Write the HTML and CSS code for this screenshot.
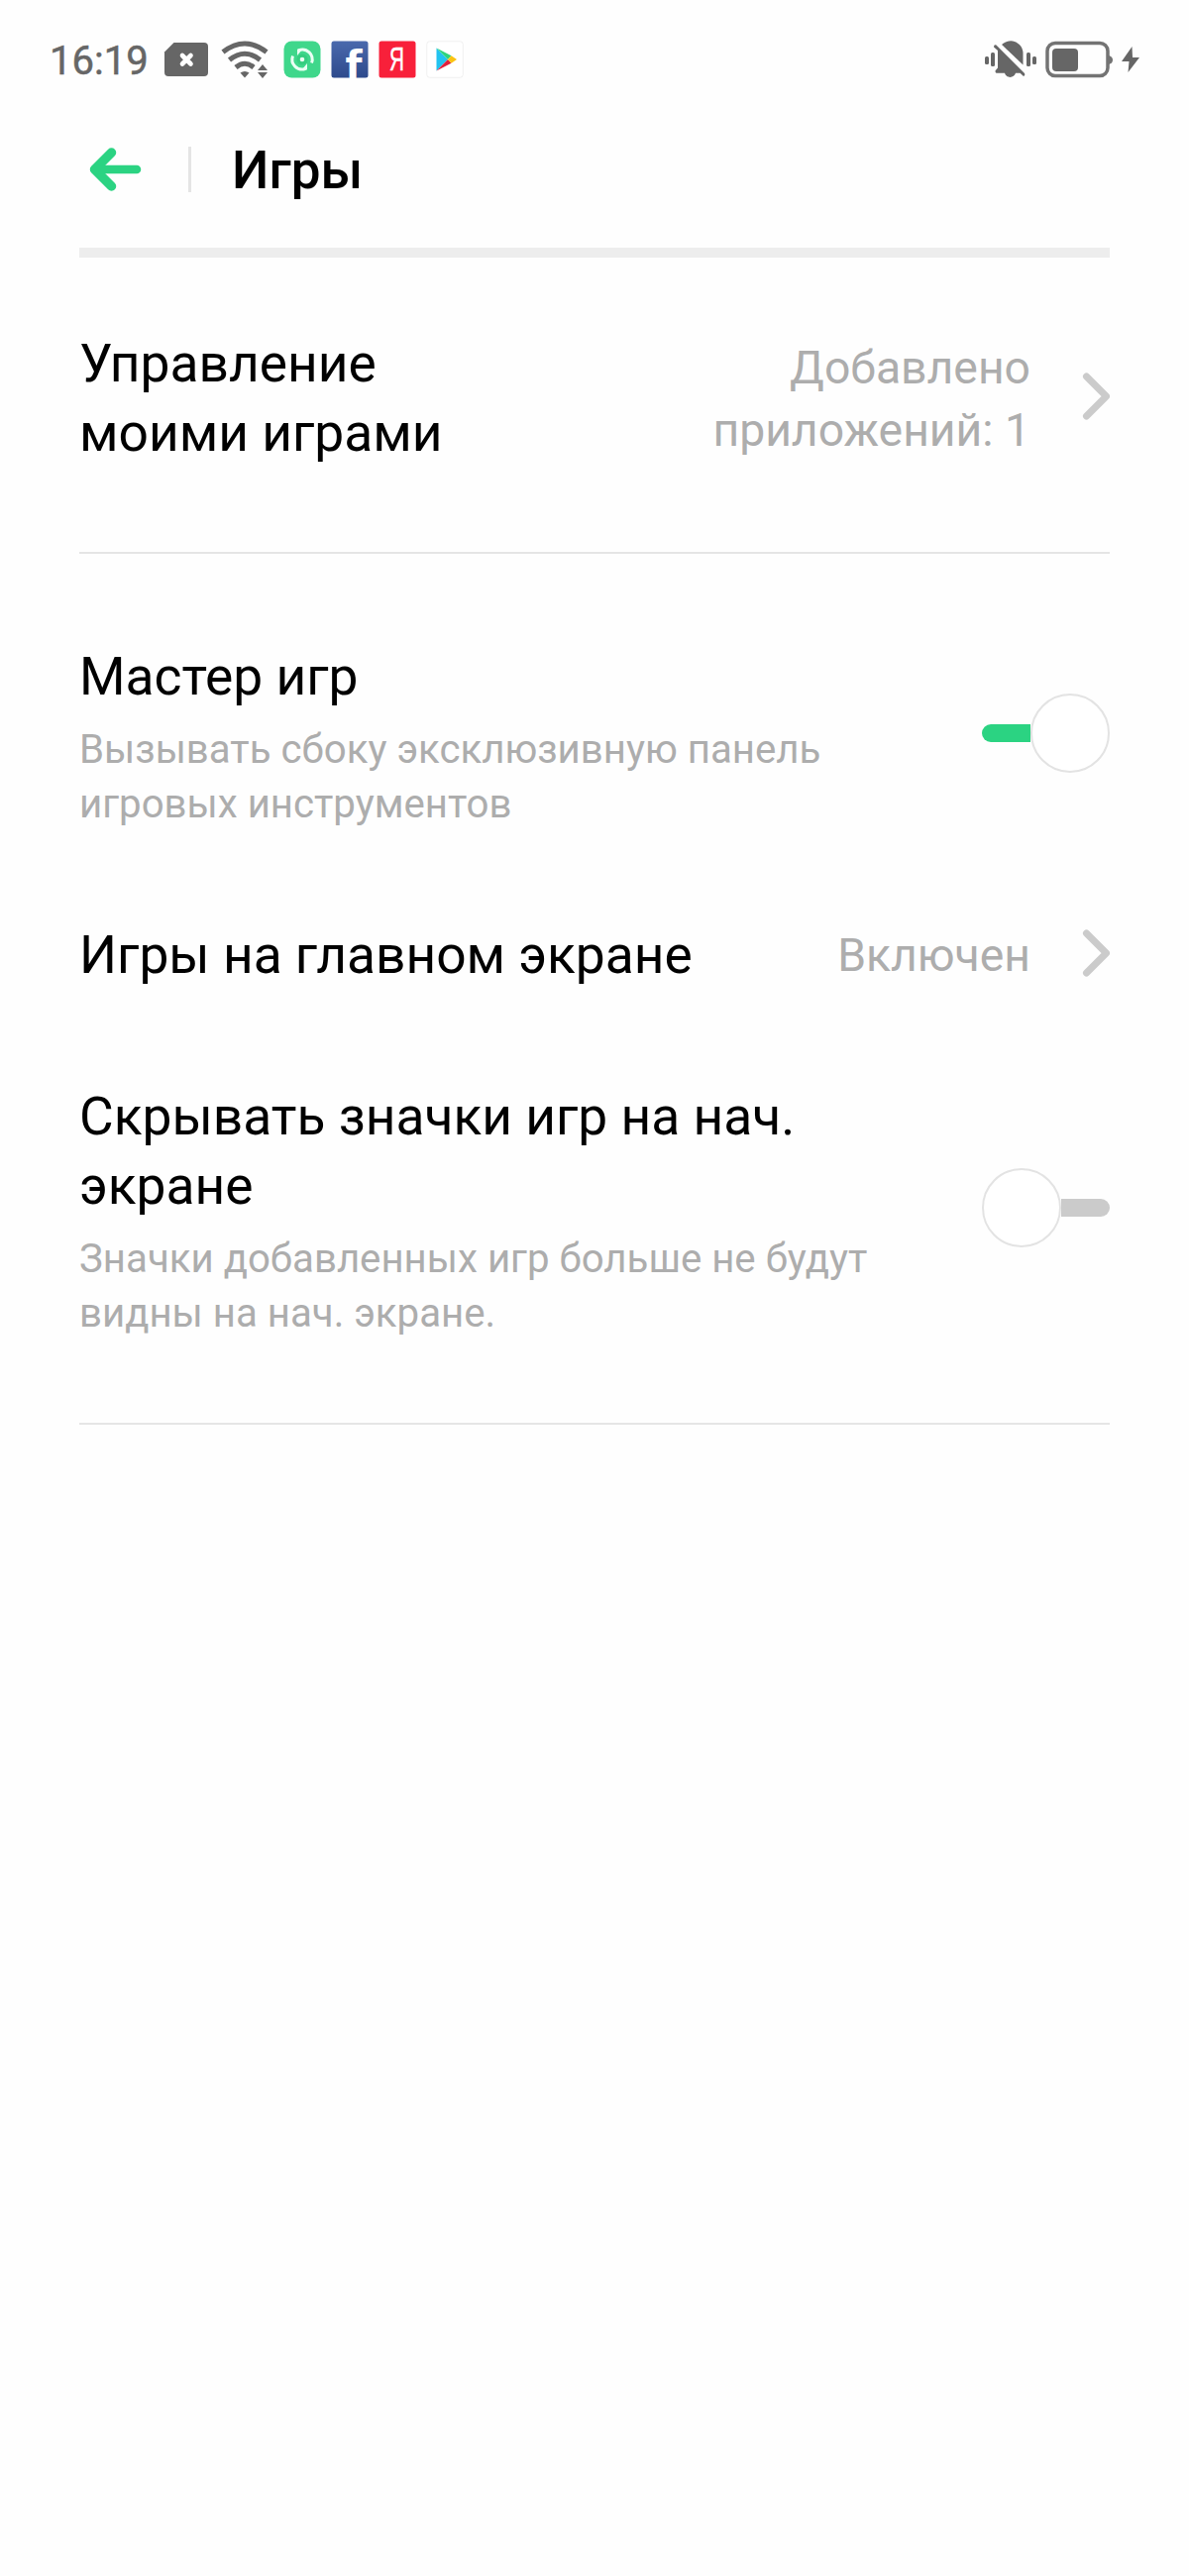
FILE: index.html
```html
<!DOCTYPE html>
<html lang="ru">

<head>
    <meta charset="UTF-8">
    <meta name="viewport" content="width=device-width, initial-scale=1.0">
    <title>Игры</title>
    <link rel="stylesheet" href="styles.css">
</head>

<body>
    <!-- Строка состояния -->
    <div class="status-bar">
        <div class="status-left">
            <span class="time">16:19</span>
            <svg class="icon-sim" width="46" height="36" viewBox="0 0 46 36">
                <path d="M10.500 1H41a4 4 0 0 1 4 4v26a4 4 0 0 1-4 4H5a4 4 0 0 1-4-4V10.500z" fill="#666" />
                <path d="M19 14l8.500 8.500M27.500 14L19 22.500" stroke="#fff" stroke-width="4.600" stroke-linecap="round" />
            </svg>
            <svg class="icon-wifi" width="48" height="38" viewBox="0 0 48 38">
                <g fill="none" stroke="#666" stroke-width="5">
                    <path d="M2 11.500Q24 -5.500 46 11.500" />
                    <path d="M8.500 19.500Q24 7 39.500 19.500" />
                    <path d="M15 27Q24 19.500 33 27" />
                </g>
                <path d="M19.500 32.500q4.500-3 9 0L24 37.500z" fill="#666" />
                <path d="M37 30l5-6 5 6zM37 32h10l-5 6z" fill="#666" />
            </svg>
            <svg class="app-icon" width="38" height="38" viewBox="0 0 38 38">
                <rect x=".5" y=".5" width="37" height="37" rx="8" fill="#3fd78b" />
                <g fill="none" stroke="#eafff4" stroke-width="3">
                    <path d="M9.500 15.500A10 10 0 0 0 22.500 28.300" />
                    <path d="M28.500 22.500A10 10 0 0 0 15.500 9.700" />
                </g>
                <path d="M14 8.500l5 .5-5 6zM24 29.500l-5-.5 5-6z" fill="#eafff4" />
                <circle cx="19" cy="19" r="5.500" fill="#35cd80" />
                <circle cx="19" cy="19" r="2.300" fill="#eafff4" />
            </svg>
            <svg class="app-icon" width="38" height="38" viewBox="0 0 38 38">
                <defs>
                    <linearGradient id="fb" x1="0" y1="0" x2="0" y2="1">
                        <stop offset="0" stop-color="#4a69ad" />
                        <stop offset="1" stop-color="#2d4a8c" />
                    </linearGradient>
                </defs>
                <rect x=".5" y=".5" width="37" height="37" rx="2.500" fill="url(#fb)" />
                <text class="fb-letter" x="14.500" y="37.500">f</text>
            </svg>
            <svg class="app-icon" width="38" height="38" viewBox="0 0 38 38">
                <rect x=".5" y=".5" width="37" height="37" rx="2.500" fill="#f8203a" />
                <text class="ya-letter" x="11" y="30" textLength="15" lengthAdjust="spacingAndGlyphs">Я</text>
            </svg>
            <svg class="app-icon" width="38" height="38" viewBox="0 0 38 38">
                <rect x=".75" y=".75" width="36.500" height="36.500" rx="3" fill="#fff" stroke="#f0f0f0" stroke-width="1" />
                <path d="M10.500 7.500v23L22 19z" fill="#22c3f0" />
                <path d="M10.500 7.500L25.500 15.300 22 19z" fill="#2fd47c" />
                <path d="M10.500 30.500L25.500 22.700 22 19z" fill="#e0203c" />
                <path d="M25.500 15.300L31 19 25.500 22.700 22 19z" fill="#fbc312" />
            </svg>
        </div>
        <div class="status-right">
            <svg class="icon-bell" width="53" height="40" viewBox="0 0 53 40">
                <g fill="#666">
                    <rect x="1" y="17" width="4" height="8" rx="1.500" />
                    <rect x="7" y="13" width="4" height="14" rx="1.500" />
                    <rect x="43" y="13" width="4" height="14" rx="1.500" />
                    <rect x="49" y="17" width="4" height="8" rx="1.500" />
                    <path d="M18 5C22 1.500 27 .500 31 2c5 2 8.500 6 8.500 12v11.500z" />
                    <path d="M12.500 5.500L41 34q1 2-1 3l-3.500-3.200H32c-1.500 5.500-9.500 5.500-11 0H12.500q-2-2 0-3.500l1.500-1.800V11L10 7.500q0-3 2.500-2z" />
                </g>
            </svg>
            <svg class="icon-battery" width="68" height="38" viewBox="0 0 68 38">
                <rect x="2" y="2.500" width="61" height="33" rx="8" fill="none" stroke="#737373" stroke-width="3.500" />
                <rect x="7" y="8" width="26" height="23" rx="4" fill="#666" />
                <path d="M64 15q4 1 4 4.500t-4 4.500z" fill="#737373" />
            </svg>
            <svg class="icon-bolt" width="20" height="28" viewBox="0 0 20 28">
                <path d="M11.500 1L1 16h7.500L7.500 27 19 12h-7z" fill="#666" />
            </svg>
        </div>
    </div>

    <!-- Заголовок -->
    <div class="header">
        <svg class="back" width="58" height="46" viewBox="0 0 58 46">
            <path d="M26.500 6L9.500 23l17 17" fill="none" stroke="#2bd382" stroke-width="9.500" stroke-linecap="round" stroke-linejoin="round" />
            <path d="M9.500 23H52" fill="none" stroke="#2bd382" stroke-width="8.500" stroke-linecap="round" />
        </svg>
        <div class="header-line"></div>
        <h1>Игры</h1>
    </div>

    <!-- Настройки -->
    <div class="section">
        <div class="row">
            <div class="text narrow">
                <div class="title">Управление моими играми</div>
            </div>
            <div class="value">Добавлено<br>приложений: 1</div>
            <svg class="arrow" width="28" height="48" viewBox="0 0 28 48">
                <path d="M4.500 4l20 20-20 20" />
            </svg>
        </div>
    </div>

    <div class="section second">
        <div class="row">
            <div class="text">
                <div class="title">Мастер игр</div>
                <div class="desc">Вызывать сбоку эксклюзивную панель игровых инструментов</div>
            </div>
            <div class="switch on"><span class="knob"></span></div>
        </div>
        <div class="row single">
            <div class="text">
                <div class="title">Игры на главном экране</div>
            </div>
            <div class="value">Включен</div>
            <svg class="arrow" width="28" height="48" viewBox="0 0 28 48">
                <path d="M4.500 4l20 20-20 20" />
            </svg>
        </div>
        <div class="row">
            <div class="text">
                <div class="title">Скрывать значки игр на нач. экране</div>
                <div class="desc">Значки добавленных игр больше не будут видны на нач. экране.</div>
            </div>
            <div class="switch"><span class="knob"></span></div>
        </div>
    </div>
</body>

</html>
```
FILE: styles.css
```css
body {
    margin: 0;
    min-height: 2600px;
    background-color: #fefefe;
    font-family: Roboto, "Noto Sans", sans-serif;
    color: #000;
}

/* строка состояния */
.status-bar {
    display: flex;
    justify-content: space-between;
    height: 120px;
    padding: 0 49px 0 50px;
    box-sizing: border-box;
}

.status-left,
.status-right {
    display: flex;
    align-items: center;
    height: 120px;
}

.time {
    width: 115px;
    font-size: 40px;
    line-height: 48px;
    color: #666;
    margin-top: 3px;
    -webkit-text-stroke: 0.5px #666;
}

.icon-wifi {
    margin-left: 12px;
}

.app-icon {
    margin-left: 10px;
    overflow: visible;
}

.icon-wifi + .app-icon {
    margin-left: 15px;
}

.fb-letter {
    font-family: "DejaVu Sans", sans-serif;
    font-weight: bold;
    font-size: 39px;
    fill: #fff;
}

.ya-letter {
    font-family: "Liberation Sans", Arial, sans-serif;
    font-size: 34px;
    fill: #fff;
    stroke: #fff;
    stroke-width: 0.5px;
}

.icon-battery {
    margin-left: 9px;
}

.icon-bolt {
    margin-left: 8px;
}

/* заголовок */
.header {
    display: flex;
    align-items: center;
    height: 130px;
    margin: 0 80px;
    padding: 0 0 28px 6px;
    box-sizing: border-box;
}

.header-line {
    width: 3px;
    height: 46px;
    margin: 0 41px 0 46px;
    background-color: #e5e5e5;
}

h1 {
    margin: 0;
    padding-top: 2px;
    font-size: 53px;
    line-height: 64px;
    font-weight: 500;
}

/* пункты настроек */
.section {
    margin: 0 80px;
    padding: 72px 0 85px;
    border-top: 10px solid #ededed;
    border-bottom: 2px solid #e5e5e5;
}

.section.second {
    padding: 89px 0 83px;
    border-top: none;
}

.row {
    display: flex;
    align-items: center;
    margin-bottom: 90px;
}

.row.single {
    margin-bottom: 93px;
}

.row:last-child {
    margin-bottom: 0;
}

.text {
    flex: 1;
    padding-right: 50px;
}

.narrow .title {
    max-width: 400px;
}

.title {
    font-size: 53.3px;
    line-height: 70px;
}

.desc {
    margin-top: 12px;
    font-size: 40.2px;
    line-height: 54.5px;
    color: #adadad;
}

.value {
    padding-top: 2px;
    font-size: 46.3px;
    line-height: 63.3px;
    color: #adadad;
    text-align: right;
}

.arrow {
    margin: 0 0 5px 52px;
    fill: none;
    stroke: #cbcbcb;
    stroke-width: 7;
    stroke-linecap: round;
    stroke-linejoin: round;
}

/* переключатель */
.switch {
    display: flex;
    align-items: center;
    width: 129px;
    height: 80px;
    margin-bottom: 7px;
}

.switch::after {
    content: "";
    flex: 1;
    height: 18px;
    background-color: #cbcbcb;
    border-radius: 0 9px 9px 0;
}

.switch.on {
    flex-direction: row-reverse;
}

.switch.on::after {
    background-color: #2bd382;
    border-radius: 9px 0 0 9px;
}

.knob {
    width: 80px;
    height: 80px;
    box-sizing: border-box;
    border: 2px solid #e3e3e3;
    border-radius: 50%;
    background-color: #fff;
}
```
